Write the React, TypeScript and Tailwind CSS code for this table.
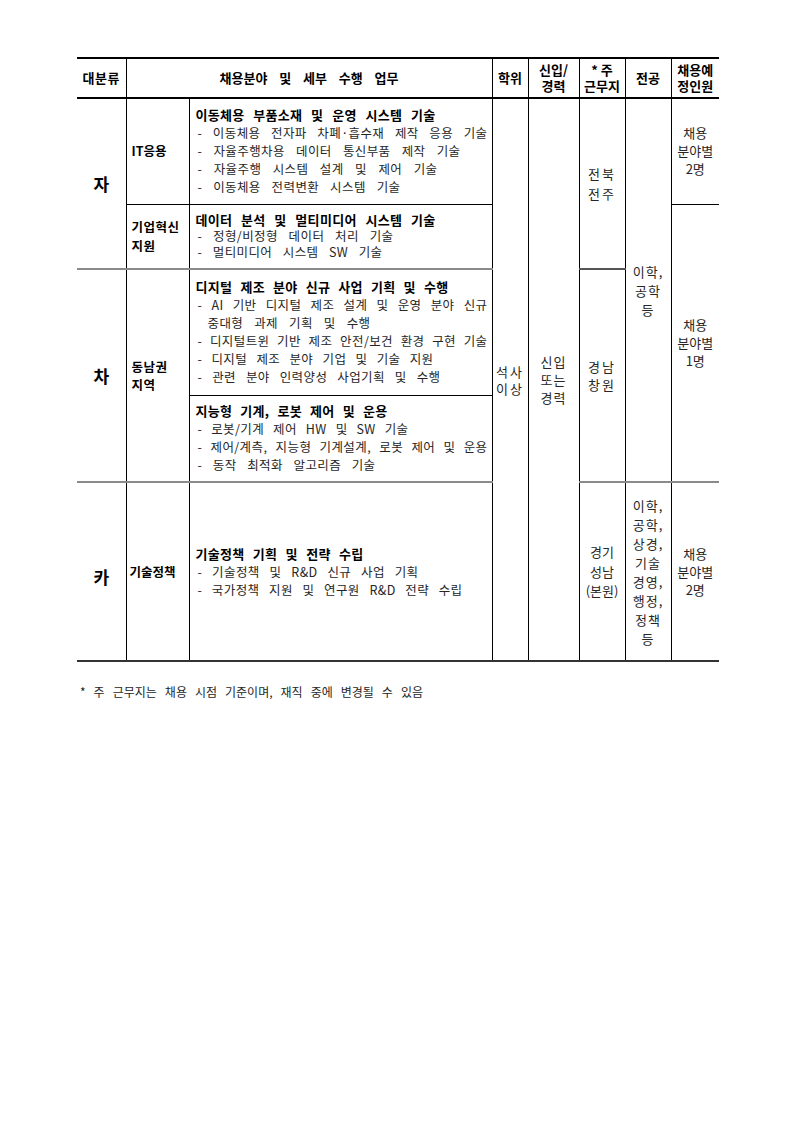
import React from "react";

// each line is stretched to the width it has in the source document
type Line = { text: string; w: number; indent?: boolean };

interface TaskBlock {
  title: string;
  titleW: number;
  lines: Line[];
  leading: string;
}

const tasks: Record<string, TaskBlock> = {
  mobility: {
    title: "이동체용 부품소재 및 운영 시스템 기술",
    titleW: 240,
    leading: "leading-[18px]",
    lines: [
      { text: "- 이동체용 전자파 차폐·흡수재 제작 응용 기술", w: 290 },
      { text: "- 자율주행차용 데이터 통신부품 제작 기술", w: 263 },
      { text: "- 자율주행 시스템 설계 및 제어 기술", w: 240 },
      { text: "- 이동체용 전력변환 시스템 기술", w: 203 },
    ],
  },
  data: {
    title: "데이터 분석 및 멀티미디어 시스템 기술",
    titleW: 240,
    leading: "leading-[16px]",
    lines: [
      { text: "- 정형/비정형 데이터 처리 기술", w: 196 },
      { text: "- 멀티미디어 시스템 SW 기술", w: 185 },
    ],
  },
  digital: {
    title: "디지털 제조 분야 신규 사업 기획 및 수행",
    titleW: 253,
    leading: "leading-[18px]",
    lines: [
      { text: "- AI 기반 디지털 제조 설계 및 운영 분야 신규", w: 290 },
      { text: "중대형 과제 기획 및 수행", w: 163, indent: true },
      { text: "- 디지털트윈 기반 제조 안전/보건 환경 구현 기술", w: 290 },
      { text: "- 디지털 제조 분야 기업 및 기술 지원", w: 236 },
      { text: "- 관련 분야 인력양성 사업기획 및 수행", w: 243 },
    ],
  },
  robot: {
    title: "지능형 기계, 로봇 제어 및 운용",
    titleW: 192,
    leading: "leading-[18px]",
    lines: [
      { text: "- 로봇/기계 제어 HW 및 SW 기술", w: 211 },
      { text: "- 제어/계측, 지능형 기계설계, 로봇 제어 및 운용", w: 290 },
      { text: "- 동작 최적화 알고리즘 기술", w: 178 },
    ],
  },
  policy: {
    title: "기술정책 기획 및 전략 수립",
    titleW: 168,
    leading: "leading-[18px]",
    lines: [
      { text: "- 기술정책 및 R&D 신규 사업 기획", w: 221 },
      { text: "- 국가정책 지원 및 연구원 R&D 전략 수립", w: 265 },
    ],
  },
};

const TaskCell = ({ block }: { block: TaskBlock }) => (
  <div className={`pl-[6px] ${block.leading}`}>
    <div
      className="text-[13px] font-bold tracking-[0.3px] text-black text-justify [text-align-last:justify]"
      style={{ width: block.titleW }}
    >
      {block.title}
    </div>
    {block.lines.map((l, i) => (
      <div
        key={i}
        className={`text-[12.5px] tracking-[0.4px] text-[#262626] text-justify [text-align-last:justify] ${
          l.indent ? "ml-[12px]" : "ml-[2px]"
        }`}
        style={{ width: l.w }}
      >
        {l.text}
      </div>
    ))}
  </div>
);

const Stack = ({ lines, className = "" }: { lines: string[]; className?: string }) => (
  <div className={`text-center text-[13px] text-[#262626] ${className}`}>
    {lines.map((t, i) => (
      <div key={i}>{t}</div>
    ))}
  </div>
);

const head = "border-t-2 border-b-2 border-t-black border-b-black text-center text-[13px] font-bold leading-[16px] text-black p-0";
const vl = "border-l border-l-black";
const groupTop = "border-t-2 border-t-[#8a8a8a]";
const subTop = "border-t border-t-black";
const bottom = "border-b-2 border-b-[#333]";

export default function App() {
  return (
    <div className="min-h-[1121px] w-[793px] bg-white pt-[57px] pl-[77px] font-['Noto_Sans_CJK_KR','Noto_Sans',sans-serif]">
      <table className="table-fixed border-collapse w-[642px]">
        <colgroup>
          <col className="w-[49px]" />
          <col className="w-[63px]" />
          <col className="w-[303px]" />
          <col className="w-[36px]" />
          <col className="w-[51px]" />
          <col className="w-[46px]" />
          <col className="w-[46px]" />
          <col className="w-[48px]" />
        </colgroup>
        <thead>
          <tr className="h-[40px]">
            <th className={`${head} tracking-[0.5px]`}>대분류</th>
            <th colSpan={2} className={`${head} ${vl}`}>
              <div className="mx-auto w-[179px] text-justify [text-align-last:justify]">채용분야 및 세부 수행 업무</div>
            </th>
            <th className={`${head} ${vl}`}>학위</th>
            <th className={`${head} ${vl}`}>
              <div>신입/</div>
              <div>경력</div>
            </th>
            <th className={`${head} ${vl}`}>
              <div>* 주</div>
              <div>근무지</div>
            </th>
            <th className={`${head} ${vl}`}>전공</th>
            <th className={`${head} ${vl}`}>
              <div>채용예</div>
              <div>정인원</div>
            </th>
          </tr>
        </thead>
        <tbody className="align-middle">
          <tr className="h-[106px]">
            <td rowSpan={2} className="text-center text-[17px] font-bold text-black">
              자
            </td>
            <td className={`${vl} pl-[5px] text-[12.5px] font-bold text-black`}>IT응용</td>
            <td className={vl}>
              <TaskCell block={tasks.mobility} />
            </td>
            <td rowSpan={5} className={`${vl} ${bottom}`}>
              <Stack lines={["석사", "이상"]} className="leading-[17px] tracking-[2px]" />
            </td>
            <td rowSpan={5} className={`${vl} ${bottom}`}>
              <Stack lines={["신입", "또는", "경력"]} className="leading-[18px] tracking-[1px]" />
            </td>
            <td rowSpan={2} className={vl}>
              <Stack lines={["전북", "전주"]} className="leading-[20px] tracking-[2px]" />
            </td>
            <td rowSpan={4} className={vl}>
              <Stack lines={["이학,", "공학", "등"]} className="leading-[19px] tracking-[1px]" />
            </td>
            <td className={vl}>
              <Stack lines={["채용", "분야별", "2명"]} className="leading-[18px]" />
            </td>
          </tr>
          <tr className="h-[65px]">
            <td className={`${vl} ${subTop} pl-[5px] text-[12.5px] font-bold leading-[19px] tracking-[0.5px] text-black`}>
              <div>기업혁신</div>
              <div>지원</div>
            </td>
            <td className={`${vl} ${subTop}`}>
              <TaskCell block={tasks.data} />
            </td>
            <td rowSpan={3} className={`${vl} ${subTop}`}>
              <Stack lines={["채용", "분야별", "1명"]} className="leading-[18px]" />
            </td>
          </tr>
          <tr className="h-[126px]">
            <td rowSpan={2} className={`${groupTop} text-center text-[17px] font-bold text-black`}>
              차
            </td>
            <td
              rowSpan={2}
              className={`${vl} ${groupTop} pl-[5px] text-[12.5px] font-bold leading-[18px] tracking-[0.5px] text-black`}
            >
              <div>동남권</div>
              <div>지역</div>
            </td>
            <td className={`${vl} ${groupTop}`}>
              <TaskCell block={tasks.digital} />
            </td>
            <td rowSpan={2} className={`${vl} border-t-2 border-t-[#555]`}>
              <Stack lines={["경남", "창원"]} className="leading-[18px] tracking-[2px]" />
            </td>
          </tr>
          <tr className="h-[87px]">
            <td className={`${vl} ${subTop}`}>
              <TaskCell block={tasks.robot} />
            </td>
          </tr>
          <tr className="h-[179px]">
            <td className={`${groupTop} ${bottom} text-center text-[17px] font-bold text-black`}>
              <div className="pt-[10px]">카</div>
            </td>
            <td className={`${vl} ${groupTop} ${bottom} pl-[3px] text-[12.5px] font-bold text-black`}>
              <div className="pt-[2px]">기술정책</div>
            </td>
            <td className={`${vl} ${groupTop} ${bottom}`}>
              <TaskCell block={tasks.policy} />
            </td>
            <td className={`${vl} ${groupTop} ${bottom}`}>
              <Stack lines={["경기", "성남", "(본원)"]} className="leading-[19.5px]" />
            </td>
            <td className={`${vl} ${groupTop} ${bottom}`}>
              <Stack
                lines={["이학,", "공학,", "상경,", "기술", "경영,", "행정,", "정책", "등"]}
                className="leading-[19px] tracking-[1px]"
              />
            </td>
            <td className={`${vl} ${groupTop} ${bottom}`}>
              <Stack lines={["채용", "분야별", "2명"]} className="leading-[18px]" />
            </td>
          </tr>
        </tbody>
      </table>
      <p className="mt-[22px] ml-[3px] w-[343px] text-[12px] leading-[16px] text-[#262626] text-justify [text-align-last:justify]">
        * 주 근무지는 채용 시점 기준이며, 재직 중에 변경될 수 있음
      </p>
    </div>
  );
}
